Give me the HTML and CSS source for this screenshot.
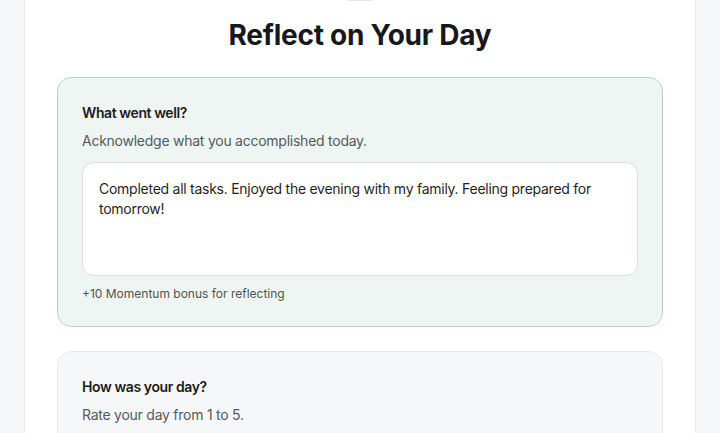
FILE: index.html
```html
<!DOCTYPE html>
<html>
<head>
<meta charset="utf-8">
<link rel="stylesheet" href="styles.css">
</head>
<body>
<div class="page">
  <main class="sheet">
    <div class="handle"></div>
    <h1 class="title">Reflect on Your Day</h1>
    <section class="panel panel-good">
      <h2 class="panel-title">What went well?</h2>
      <p class="panel-desc">Acknowledge what you accomplished today.</p>
      <div class="entry">Completed all tasks. Enjoyed the evening with my family. Feeling prepared for tomorrow!</div>
      <p class="bonus">+10 Momentum bonus for reflecting</p>
    </section>
    <section class="panel panel-plain">
      <h2 class="panel-title">How was your day?</h2>
      <p class="panel-desc">Rate your day from 1 to 5.</p>
    </section>
  </main>
</div>
</body>
</html>
```
FILE: styles.css
```css
* { box-sizing: border-box; }
html, body { margin: 0; padding: 0; }
body {
  background: #f6f7f9;
  font-family: Inter, "Noto Sans", sans-serif;
  color: #1a1a1a;
  height: 433px;
  overflow: hidden;
}
.page {
  padding: 0 24px;
}
.sheet {
  background: #ffffff;
  border-left: 1px solid #e6e8eb;
  border-right: 1px solid #e6e8eb;
  padding: 0 32px 40px;
  min-height: 433px;
  display: flex;
  flex-direction: column;
}
.handle {
  align-self: center;
  width: 26px;
  height: 1px;
  background: #e9eaec;
  border-radius: 0 0 4px 4px;
}
.title {
  margin: 16px 0 24px;
  font-size: 28px;
  line-height: 36px;
  font-weight: 700;
  text-align: center;
  letter-spacing: -0.25px;
  color: #18181b;
}
.panel {
  border-radius: 14px;
  padding: 25px 24px 24px;
  margin-bottom: 24px;
}
.panel-good {
  background: #eef5f2;
  border: 1px solid #b6d6ca;
}
.panel-plain {
  background: #f6f7f9;
  border: 1px solid #e6e8eb;
}
.panel-title {
  margin: 0;
  font-size: 14px;
  line-height: 20px;
  font-weight: 600;
  letter-spacing: -0.4px;
  color: #1c1c1c;
}
.panel-desc {
  margin: 8px 0 0;
  font-size: 14px;
  line-height: 20px;
  letter-spacing: -0.25px;
  color: #555a60;
}
.entry {
  margin-top: 11px;
  background: #ffffff;
  border: 1px solid #dcdfe2;
  border-radius: 12px;
  padding: 16px;
  height: 114px;
  font-size: 14px;
  line-height: 20px;
  letter-spacing: -0.26px;
  color: #1f1f1f;
}
.bonus {
  margin: 10px 0 0;
  font-size: 12px;
  line-height: 16px;
  color: #4f5650;
}
```
